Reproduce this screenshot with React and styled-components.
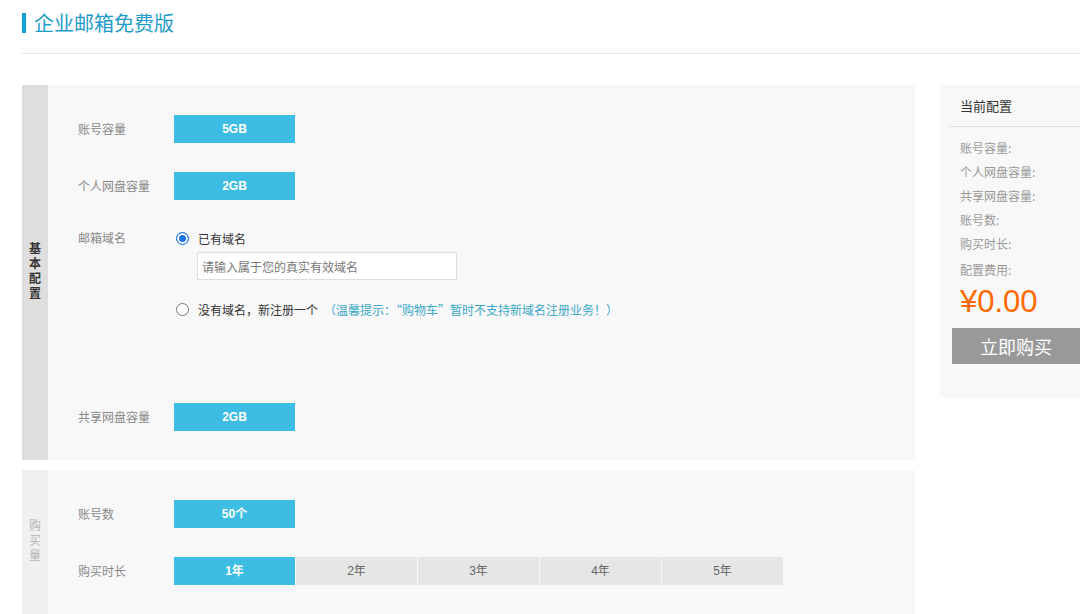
import React from 'react'
import styled, { createGlobalStyle } from 'styled-components'

const GlobalStyle = createGlobalStyle`
    body {
        margin: 0;
        background: #fff;
        font-family: "Microsoft YaHei", "Noto Sans CJK SC", "Liberation Sans", sans-serif;
    }
`

const years = ['1年', '2年', '3年', '4年', '5年']
const summary = ['账号容量:', '个人网盘容量:', '共享网盘容量:', '账号数:', '购买时长:', '配置费用:']

export default function App() {
    return (
        <Page>
            <GlobalStyle />
            <Header>
                <Title>企业邮箱免费版</Title>
            </Header>
            <Body>
                <Main>
                    <Section>
                        <Side>基本配置</Side>
                        <Content>
                            <Row>
                                <Label>账号容量</Label>
                                <Option active>5GB</Option>
                            </Row>
                            <Row>
                                <Label>个人网盘容量</Label>
                                <Option active>2GB</Option>
                            </Row>
                            <DomainRow>
                                <Label>邮箱域名</Label>
                                <Choices>
                                    <Radio>
                                        <Dot checked />
                                        已有域名
                                    </Radio>
                                    <Input placeholder="请输入属于您的真实有效域名" />
                                    <Radio spaced>
                                        <Dot />
                                        没有域名，新注册一个
                                        <Tip>（温馨提示：“购物车”暂时不支持新域名注册业务！）</Tip>
                                    </Radio>
                                </Choices>
                            </DomainRow>
                            <Row>
                                <Label>共享网盘容量</Label>
                                <Option active>2GB</Option>
                            </Row>
                        </Content>
                    </Section>
                    <Section>
                        <Side light>购买量</Side>
                        <Content>
                            <Row>
                                <Label>账号数</Label>
                                <Option active>50个</Option>
                            </Row>
                            <Row>
                                <Label>购买时长</Label>
                                <Tabs>
                                    {years.map((y, i) => (
                                        <Option key={y} active={i === 0}>{y}</Option>
                                    ))}
                                </Tabs>
                            </Row>
                        </Content>
                    </Section>
                </Main>
                <Summary>
                    <SummaryHead>当前配置</SummaryHead>
                    <SummaryList>
                        {summary.map(s => <SummaryItem key={s}>{s}</SummaryItem>)}
                    </SummaryList>
                    <Price>¥0.00</Price>
                    <BuyButton>立即购买</BuyButton>
                </Summary>
            </Body>
        </Page>
    )
}

const Page = styled.div`
    width: 1080px;
    padding-left: 22px;
    box-sizing: border-box;
    overflow: hidden;
`

const Header = styled.div`
    height: 54px;
    border-bottom: 1px solid #e6e6e6;
    padding-top: 13px;
    box-sizing: border-box;
`

const Title = styled.h1`
    margin: 0;
    height: 20px;
    line-height: 20px;
    border-left: 4px solid #11a0cf;
    padding-left: 8px;
    font-size: 20px;
    font-weight: 400;
    color: #1d9cc9;
`

const Body = styled.div`
    display: flex;
    gap: 25px;
    margin-top: 31px;
    width: 1080px;
`

const Main = styled.div`
    width: 893px;
    flex-shrink: 0;
    display: flex;
    flex-direction: column;
    gap: 10px;
`

const Section = styled.div`
    display: flex;
    background: #f8f8f8;
`

const Side = styled.div`
    width: 26px;
    flex-shrink: 0;
    background: ${p => (p.light ? '#f0f0f0' : '#dedede')};
    color: ${p => (p.light ? '#b5b5b5' : '#333')};
    font-weight: ${p => (p.light ? 400 : 700)};
    font-size: 12px;
    line-height: 15px;
    display: flex;
    align-items: center;
    justify-content: center;
    text-align: center;
    padding: 0 7px 5px;
    box-sizing: border-box;
    word-break: break-all;
`

const Content = styled.div`
    flex: 1;
    padding: 30px 0 29px 30px;
    display: flex;
    flex-direction: column;
    gap: 29px;
`

const Row = styled.div`
    display: flex;
    align-items: center;
    height: 28px;
`

const DomainRow = styled.div`
    display: flex;
    align-items: flex-start;
    height: 145px;
`

const Label = styled.div`
    width: 96px;
    flex-shrink: 0;
    font-size: 12px;
    color: #888;
    line-height: 18px;
`

const Option = styled.div`
    width: 121px;
    height: 28px;
    line-height: 28px;
    text-align: center;
    font-size: 12px;
    font-family: "Liberation Sans", "Noto Sans CJK SC", sans-serif;
    font-weight: ${p => (p.active ? 700 : 400)};
    background: ${p => (p.active ? '#3dbde3' : '#e6e6e6')};
    color: ${p => (p.active ? '#fff' : '#666')};
`

const Tabs = styled.div`
    display: flex;
    gap: 1px;
`

const Choices = styled.div`
    display: flex;
    flex-direction: column;
`

const Radio = styled.div`
    display: flex;
    align-items: center;
    height: 18px;
    font-size: 12px;
    color: #333;
    margin-top: ${p => (p.spaced ? '20px' : '0')};
`

const Dot = styled.span`
    width: 13px;
    height: 13px;
    border-radius: 50%;
    box-sizing: border-box;
    margin: 0 9px 0 2px;
    border: ${p => (p.checked ? '1px solid #1a73e8' : '1px solid #777')};
    background: ${p => (p.checked ? '#1a73e8' : '#fff')};
    box-shadow: ${p => (p.checked ? 'inset 0 0 0 2px #fff' : 'none')};
`

const Tip = styled.span`
    color: #3aa8c8;
    margin-left: 6px;
`

const Input = styled.input`
    margin: 5px 0 0 23px;
    width: 260px;
    height: 28px;
    box-sizing: border-box;
    border: 1px solid #ddd;
    background: #fff;
    padding: 0 4px;
    font-size: 12px;
    font-family: inherit;
    outline: none;
    &::placeholder {
        color: #777;
    }
`

const Summary = styled.div`
    width: 140px;
    flex-shrink: 0;
    height: 313px;
    background: #f8f8f8;
    padding: 0 0 0 12px;
    box-sizing: border-box;
`

const SummaryHead = styled.div`
    margin-left: -2px;
    height: 41px;
    line-height: 42px;
    padding-left: 10px;
    font-size: 13px;
    color: #333;
    border-bottom: 1px solid #e0e0e0;
`

const SummaryList = styled.div`
    padding: 9px 0 0 8px;
    display: flex;
    flex-direction: column;
`

const SummaryItem = styled.div`
    font-size: 12px;
    color: #999;
    line-height: 24px;
    &:last-child {
        line-height: 28px;
    }
`

const Price = styled.div`
    padding-left: 8px;
    font-size: 31px;
    line-height: 36px;
    color: #ff6a00;
    font-family: "Liberation Sans", sans-serif;
`

const BuyButton = styled.button`
    margin-top: 8px;
    width: 128px;
    height: 36px;
    border: none;
    background: #999;
    color: #fff;
    font-size: 18px;
    font-family: inherit;
    padding: 0;
    cursor: pointer;
`
